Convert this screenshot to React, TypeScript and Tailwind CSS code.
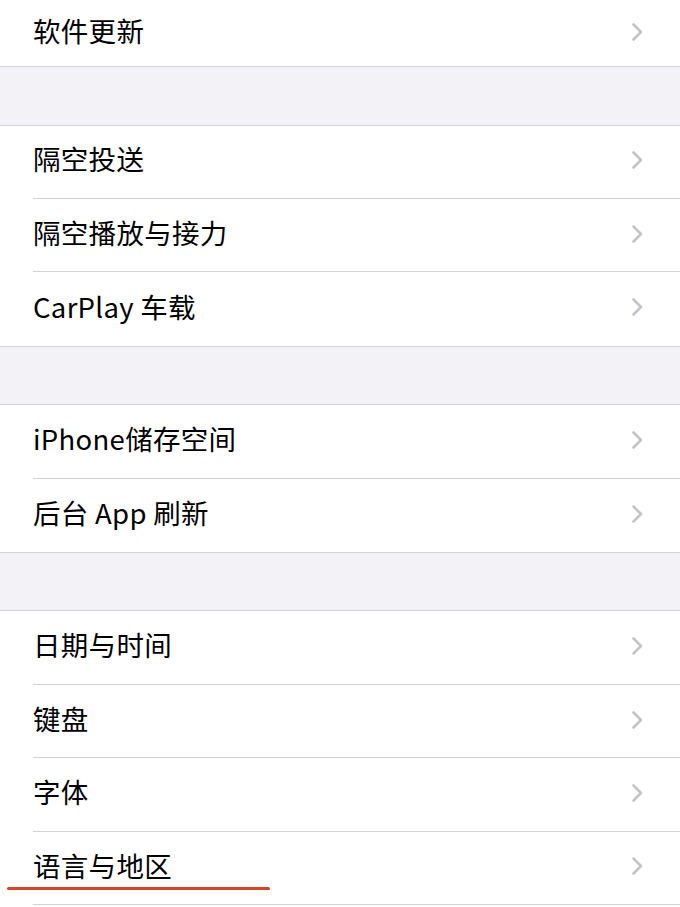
import React from "react";

const Chevron = () => (
  <svg className="mb-[3px]" width="13" height="20" viewBox="0 0 13 20" fill="none">
    <path d="M2.5 2.5 L10 10 L2.5 17.5" stroke="#c4c4c8" strokeWidth="2.6" strokeLinecap="round" strokeLinejoin="round" />
  </svg>
);

type RowProps = { label: string; last?: boolean; h?: string; underline?: boolean };

const Row = ({ label, last, h = "h-[73.4px]", underline }: RowProps) => (
  <div className={`relative pl-[33px] bg-white shrink-0 ${h}`}>
    <div className={`flex h-full items-center justify-between pr-[36px] ${last ? "" : "border-b border-[#d1d1d6]"}`}>
      <span className="pb-[5px] text-[27.5px] leading-none text-black tracking-[0.3px]">{label}</span>
      <Chevron />
    </div>
    {underline && <div className="absolute left-[7px] top-[55px] h-[3px] w-[263px] rounded-full bg-[#d4442a]" />}
  </div>
);

const Gap = () => <div className="h-[57.5px] shrink-0 bg-[#f2f2f7]" />;

export default function App() {
  return (
    <div className="flex flex-col w-[680px] h-[907px] overflow-hidden bg-[#f2f2f7]" style={{ fontFamily: '"Noto Sans CJK SC", "Noto Sans", sans-serif' }}>
      <div className="shrink-0 border-b border-[#d1d1d6]">
        <Row label="软件更新" last h="h-[66px]" />
      </div>
      <Gap />
      <div className="shrink-0 border-y border-[#d1d1d6]">
        <Row label="隔空投送" />
        <Row label="隔空播放与接力" />
        <Row label="CarPlay 车载" last />
      </div>
      <Gap />
      <div className="shrink-0 border-y border-[#d1d1d6]">
        <Row label="iPhone储存空间" />
        <Row label="后台 App 刷新" last />
      </div>
      <Gap />
      <div className="flex-1 border-t border-[#d1d1d6] bg-white">
        <Row label="日期与时间" />
        <Row label="键盘" />
        <Row label="字体" />
        <Row label="语言与地区" underline />
      </div>
    </div>
  );
}
